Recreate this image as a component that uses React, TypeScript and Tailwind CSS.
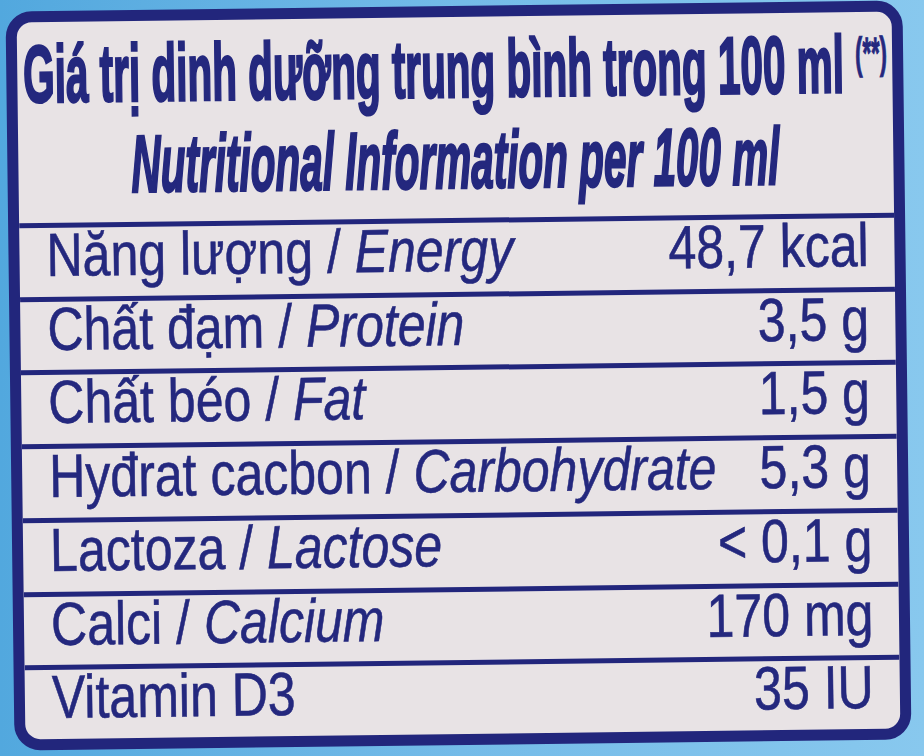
import React from 'react';

interface Row {
    vi: string;
    en?: string;
    value: string;
}

const rows: Row[] = [
    { vi: 'Năng lượng / ', en: 'Energy', value: '48,7 kcal' },
    { vi: 'Chất đạm / ', en: 'Protein', value: '3,5 g' },
    { vi: 'Chất béo / ', en: 'Fat', value: '1,5 g' },
    { vi: 'Hyđrat cacbon / ', en: 'Carbohydrate', value: '5,3 g' },
    { vi: 'Lactoza / ', en: 'Lactose', value: '< 0,1 g' },
    { vi: 'Calci / ', en: 'Calcium', value: '170 mg' },
    { vi: 'Vitamin D3', value: '35 IU' },
];

export default function App() {
    return (
        <div className="w-[924px] h-[756px] overflow-hidden bg-gradient-to-r from-[#52a8de] via-[#74bbe8] to-[#88c8ee] pl-[10px] pt-[6px] font-['Liberation_Sans',Arial,sans-serif] text-[#24287e]">
            <div className="w-[897px] h-[739px] rounded-[26px] border-[11px] border-[#22267c] bg-[#e8e3e5] -rotate-[0.7deg] overflow-hidden flex flex-col">

                {/* Header */}
                <div className="h-[201px] shrink-0 flex flex-col items-center font-bold text-[81px] leading-[91px] whitespace-nowrap [-webkit-text-stroke:2.5px_#24287e]">
                    <div className="flex justify-center w-full -mt-[5px]">
                        <span className="inline-block shrink-0 scale-x-[0.5] origin-center">
                            Giá trị dinh dưỡng trung bình trong 100 ml{' '}
                            <span className="text-[44px] align-[24px] [-webkit-text-stroke:1px_#24287e]">(**)</span>
                        </span>
                    </div>
                    <div className="flex justify-center w-full">
                        <span className="inline-block shrink-0 italic scale-x-[0.5] origin-center">
                            Nutritional Information per 100 ml
                        </span>
                    </div>
                </div>

                {/* Rows */}
                {rows.map((r) => (
                    <div
                        key={r.vi}
                        className="flex-1 border-t-[5px] border-[#22267c] flex items-start pl-[27px] pr-[26px] text-[61px] leading-[54px] whitespace-nowrap [-webkit-text-stroke:0.6px_#24287e]"
                    >
                        <div className="flex-1 min-w-0">
                            <span className="inline-block scale-x-[0.82] origin-left">
                                {r.vi}
                                {r.en && <span className="italic">{r.en}</span>}
                            </span>
                        </div>
                        <span className="inline-block shrink-0 scale-x-[0.82] origin-right">{r.value}</span>
                    </div>
                ))}
            </div>
        </div>
    );
}
